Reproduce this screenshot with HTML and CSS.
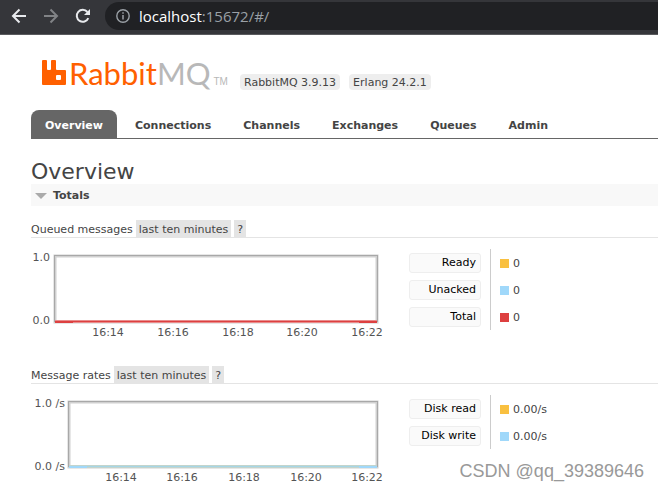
FILE: index.html
```html
<!DOCTYPE html>
<html lang="en">
<head>
<meta charset="utf-8">
<title>RabbitMQ Management</title>
<link rel="stylesheet" href="styles.css">
</head>
<body>
<div class="browser-bar">
  <button class="nav-button" type="button" aria-label="Back">
    <svg width="16" height="16" viewBox="0 0 16 16" fill="none" stroke="#e8eaed" stroke-width="2"><path d="M15 8H2.500M8.500 1.500L2 8l6.500 6.500"/></svg>
  </button>
  <button class="nav-button" type="button" aria-label="Forward">
    <svg width="16" height="16" viewBox="0 0 16 16" fill="none" stroke="#818386" stroke-width="2"><path d="M1 8h12.500M7.500 1.500L14 8l-6.500 6.500"/></svg>
  </button>
  <button class="nav-button" type="button" aria-label="Reload">
    <svg width="16" height="16" viewBox="0 0 16 16" fill="none" stroke="#e8eaed" stroke-width="2"><path d="M13.300 10.200A6 6 0 1 1 12.400 4"/><path d="M15 1v6H9z" fill="#e8eaed" stroke="none"/></svg>
  </button>
  <div class="address">
    <svg width="14" height="14" viewBox="0 0 14 14" fill="none" stroke="#9aa0a6"><circle cx="7" cy="7" r="6.200" stroke-width="1.400"/><path d="M7 6v4.500M7 3.300v1.500" stroke-width="1.500"/></svg>
    <span class="url"><b>localhost</b>:15672/#/</span>
  </div>
</div>

<div class="page">
  <header class="masthead">
    <a class="logo" href="#/">
      <svg width="24" height="26" viewBox="0 0 24 26"><path fill="#ff6000" fill-rule="evenodd" d="M1 0h3q1 0 1 1v8q0 1 1 1h2q1 0 1-1V1q0-1 1-1h3q1 0 1 1v8q0 1 1 1h8q1 0 1 1v13q0 1-1 1H1q-1 0-1-1V1q0-1 1-1zM15 15q-1 0-1 1v3q0 1 1 1h3q1 0 1-1v-3q0-1-1-1z"/></svg>
      <span class="logo-name">Rabbit<span class="logo-mq">MQ</span></span>
      <span class="logo-tm">TM</span>
    </a>
    <span class="version">RabbitMQ 3.9.13</span>
    <span class="version">Erlang 24.2.1</span>
  </header>

  <nav class="tabs">
    <a class="tab selected" href="#/">Overview</a>
    <a class="tab" href="#/connections">Connections</a>
    <a class="tab" href="#/channels">Channels</a>
    <a class="tab" href="#/exchanges">Exchanges</a>
    <a class="tab" href="#/queues">Queues</a>
    <a class="tab" href="#/users">Admin</a>
  </nav>

  <main>
    <h1>Overview</h1>
    <h2><button class="section-toggle" type="button"><svg width="12" height="6" viewBox="0 0 12 6"><path d="M0 0h12L6 6z" fill="#aaa"/></svg>Totals</button></h2>

    <section class="stats">
      <div class="stats-head">
        <h3>Queued messages</h3>
        <button class="chip" type="button">last ten minutes</button>
        <button class="chip" type="button">?</button>
      </div>
      <div class="stats-body">
        <svg class="chart" width="360" height="96" viewBox="0 0 360 96">
          <rect x="24" y="7" width="322" height="66" fill="#fff" stroke="#d0d0d0" stroke-width="3"/>
          <rect x="23.500" y="6.500" width="323" height="66" fill="none" stroke="#a8a8a8"/>
          <path d="M24 72.500h322" stroke="#e88c8c" stroke-width="3"/>
          <path d="M24 72.500h322" stroke="#dd4040" stroke-width="1"/>
          <path d="M24 73h18M328 73h18" stroke="#dd4040" stroke-width="2"/>
          <g text-anchor="end"><text x="19" y="12">1.0</text><text x="19" y="75">0.0</text></g>
          <g text-anchor="middle"><text x="77" y="87">16:14</text><text x="142" y="87">16:16</text><text x="207" y="87">16:18</text><text x="271" y="87">16:20</text><text x="336" y="87">16:22</text></g>
        </svg>
        <table class="legend">
          <tr><th><button type="button">Ready</button></th><td><i class="swatch yellow"></i>0</td></tr>
          <tr><th><button type="button">Unacked</button></th><td><i class="swatch blue"></i>0</td></tr>
          <tr><th><button type="button">Total</button></th><td><i class="swatch red"></i>0</td></tr>
        </table>
      </div>
    </section>

    <section class="stats">
      <div class="stats-head">
        <h3>Message rates</h3>
        <button class="chip" type="button">last ten minutes</button>
        <button class="chip" type="button">?</button>
      </div>
      <div class="stats-body">
        <svg class="chart" width="360" height="96" viewBox="0 0 360 96">
          <rect x="38" y="7" width="308" height="65" fill="#fff" stroke="#d0d0d0" stroke-width="3"/>
          <rect x="37.500" y="6.500" width="309" height="65" fill="none" stroke="#a8a8a8"/>
          <path d="M38 71.500h308" stroke="#c3d4cc" stroke-width="3"/>
          <path d="M38 71.500h308" stroke="#a5d6e6" stroke-width="1"/>
          <path d="M38 72h18M328 72h18" stroke="#a0d8fa" stroke-width="2"/>
          <g text-anchor="end"><text x="34" y="12">1.0 /s</text><text x="34" y="75">0.0 /s</text></g>
          <g text-anchor="middle"><text x="90" y="86">16:14</text><text x="151" y="86">16:16</text><text x="213" y="86">16:18</text><text x="275" y="86">16:20</text><text x="336" y="86">16:22</text></g>
        </svg>
        <table class="legend">
          <tr><th><button type="button">Disk read</button></th><td><i class="swatch yellow"></i>0.00/s</td></tr>
          <tr><th><button type="button">Disk write</button></th><td><i class="swatch blue"></i>0.00/s</td></tr>
        </table>
      </div>
    </section>
  </main>
</div>
<div class="watermark">CSDN @qq_39389646</div>
</body>
</html>
```
FILE: styles.css
```css
* { box-sizing: border-box; }

body {
  margin: 0;
  background: #fff;
  color: #444;
  font: 11px/16px Verdana, "DejaVu Sans", sans-serif;
  overflow: hidden;
}

button {
  margin: 0;
  padding: 0;
  border: 0;
  background: none;
  color: inherit;
  font: inherit;
}

a { color: inherit; text-decoration: none; }

.browser-bar {
  display: flex;
  gap: 16px;
  height: 35px;
  padding: 2px 0 4px 11px;
  background: #35363a;
  border-bottom: 1px solid #5a5b5e;
}

.nav-button { display: flex; align-items: center; width: 16px; }

.address {
  display: flex;
  flex: 1;
  align-items: center;
  gap: 9px;
  margin-left: -2px;
  padding-left: 11px;
  background: #202124;
  border-radius: 14px 0 0 14px;
}

.url { color: #9aa0a6; font: 15px/20px "Open Sans", sans-serif; }
.url b { color: #fff; font-weight: 400; }

.page { padding-left: 31px; }

.masthead {
  display: flex;
  align-items: flex-end;
  gap: 9px;
  height: 75px;
  padding: 0 0 20px 11px;
}

.logo {
  display: flex;
  align-items: flex-end;
  gap: 3px;
  width: 189px;
  height: 34px;
}

.logo svg { margin-bottom: 4px; flex: none; }
.logo-name { color: #ff6000; font: 31px/34px Lato, sans-serif; }
.logo-mq { color: #b8b8b8; }
.logo-tm { color: #b8b8b8; font: 10px/16px "Liberation Sans", sans-serif; }

.version {
  padding: 1px 4px 0;
  line-height: 15px;
  background: #eee;
  border-radius: 4px;
}

.tabs { display: flex; border-bottom: 1px solid #666; }

.tab {
  margin-right: 4px;
  padding: 8px 14px 4px;
  font-weight: 700;
  border-radius: 8px 8px 0 0;
}

.tab.selected { background: #666; color: #fff; }

h1 {
  margin: 20px 0 0;
  font-size: 22px;
  line-height: 25px;
  font-weight: 400;
}

h2 { margin: 0 0 14px; background: #f8f8f8; font-size: 11px; }

.section-toggle {
  display: flex;
  align-items: center;
  gap: 6px;
  width: 100%;
  height: 22px;
  padding: 2px 4px 0;
}

.stats { height: 146px; }

.stats-head {
  display: flex;
  gap: 3px;
  line-height: 15px;
  border-bottom: 1px solid #e4e4e4;
}

h3 { margin: 0; padding-top: 2px; font-size: 11px; font-weight: 400; }
.chip { padding: 2px 3px 0; background: #e4e4e4; }

.stats-body { display: flex; gap: 18px; padding-top: 11px; }
.chart { flex: none; }
.chart text { fill: #545454; font-size: 11px; }

.legend { align-self: flex-start; border-collapse: collapse; }
.legend th { padding: 0 9px 0 0; border-right: 1px solid #ccc; font-weight: 400; }

.legend button {
  display: block;
  width: 72px;
  height: 20px;
  padding: 0 4px;
  background: #fafafa;
  border: 1px solid #eee;
  border-radius: 3px;
  color: #000;
  text-align: right;
}

.legend td { height: 27px; padding: 2px 0 0 9px; }

.swatch {
  display: inline-block;
  width: 9px;
  height: 9px;
  margin-right: 4px;
  vertical-align: -1px;
}

.yellow { background: #f9c040; }
.blue { background: #a0d8fa; }
.red { background: #dd4040; }

.watermark {
  position: absolute;
  right: 14px;
  bottom: 6px;
  color: #999;
  font: 18px/24px "Liberation Sans", sans-serif;
  text-shadow: 1px 1px 1px #fff;
}
```
